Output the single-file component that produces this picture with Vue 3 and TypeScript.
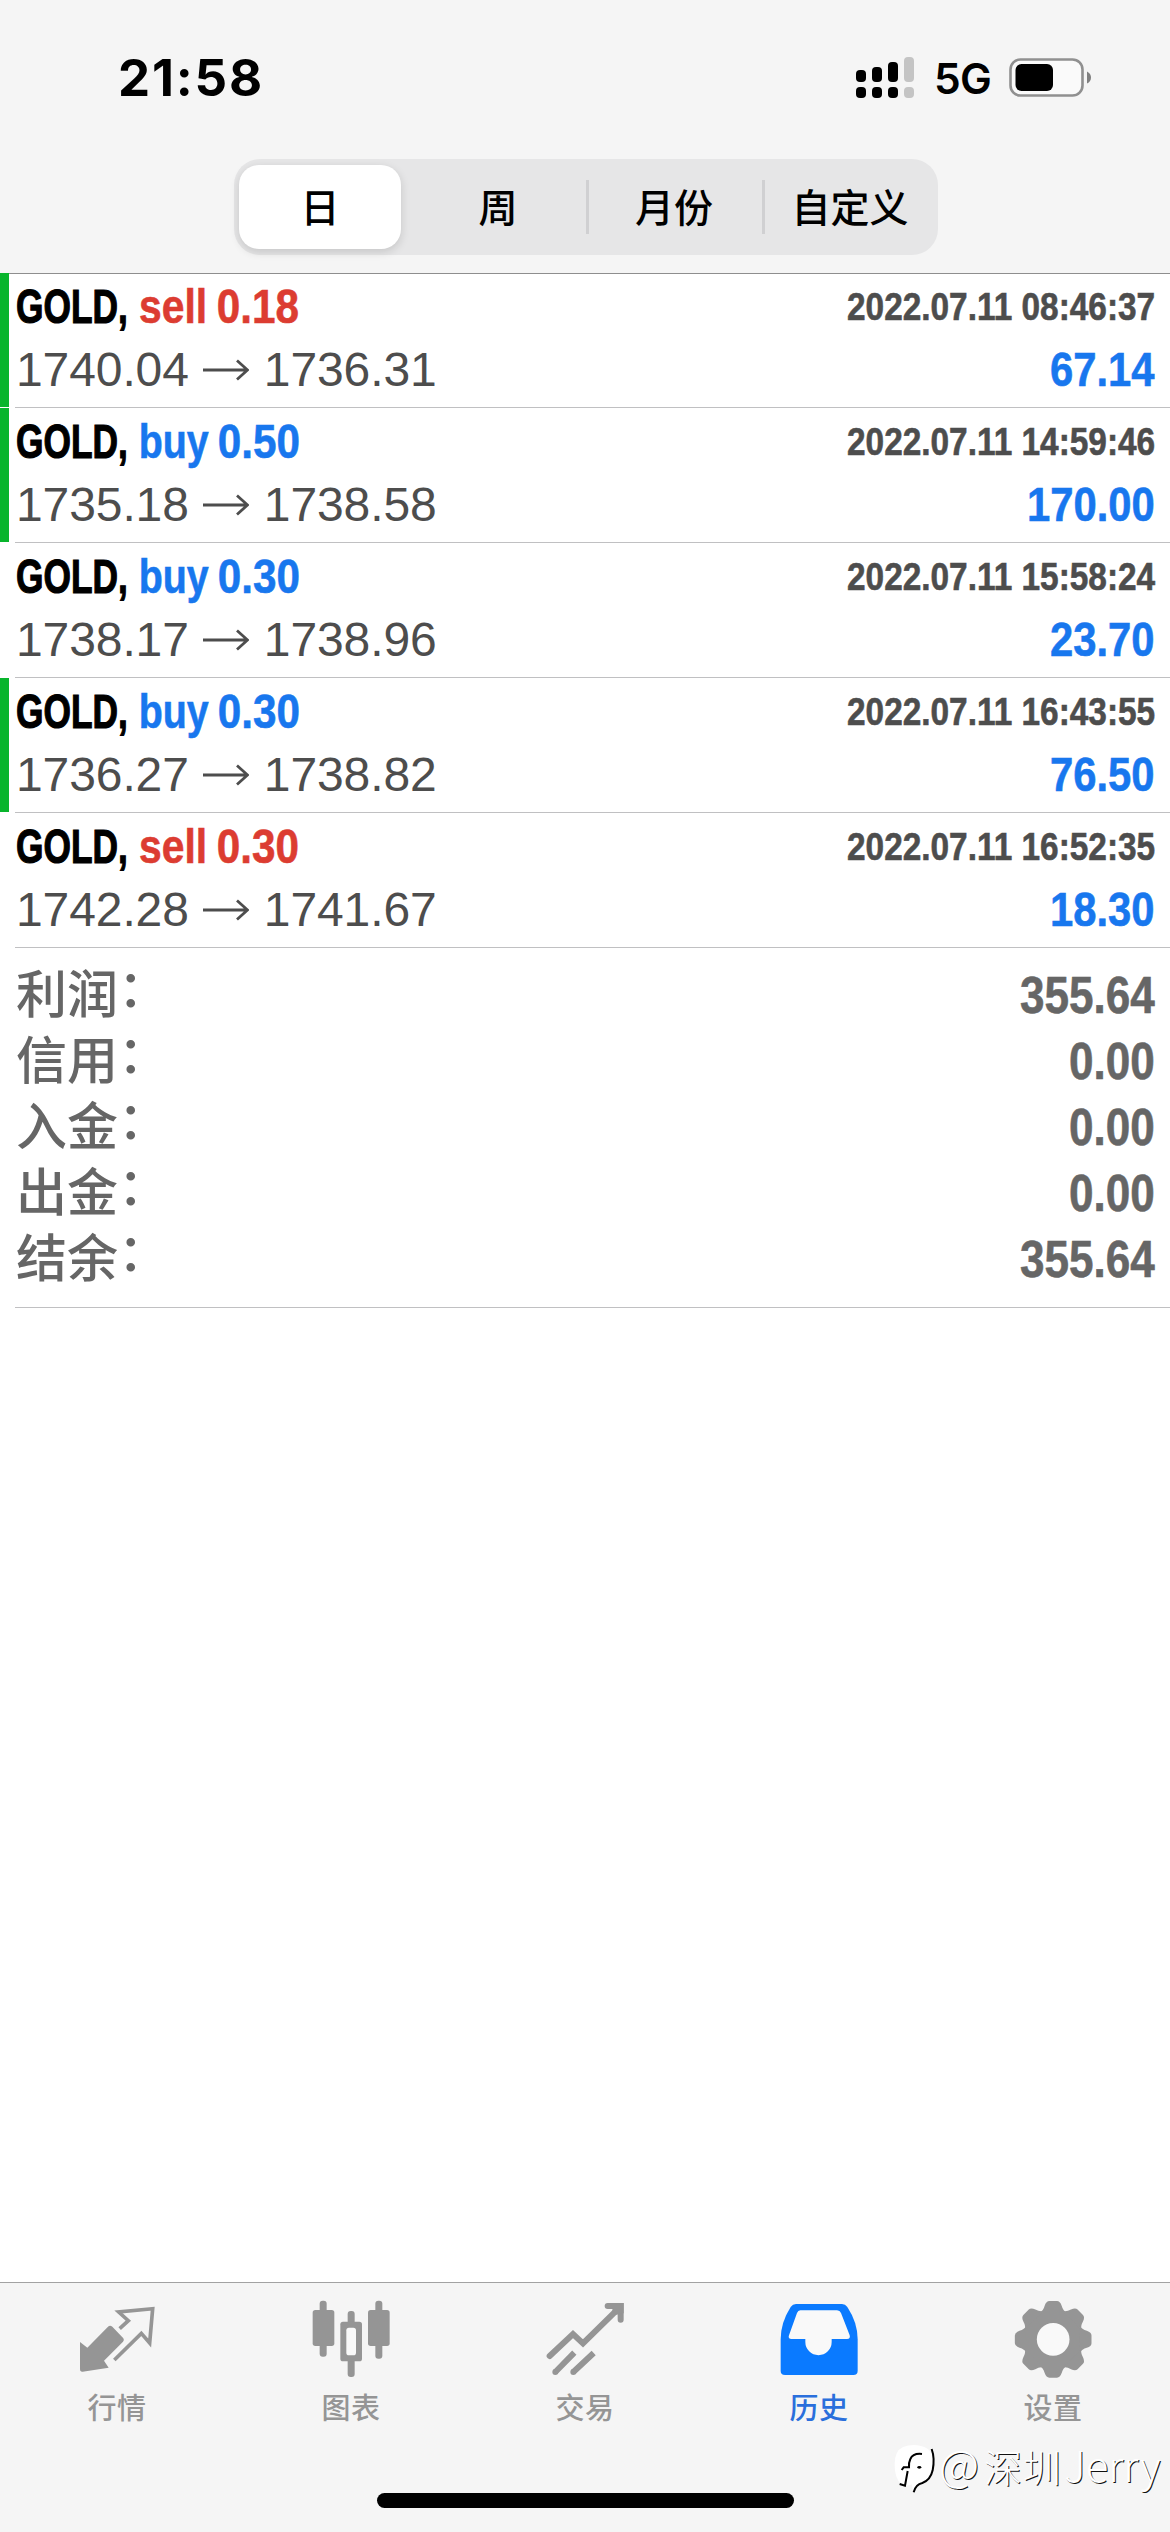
<script setup lang="ts">
interface Deal {
  symbol: string
  side: 'buy' | 'sell'
  volume: string
  open: string
  close: string
  time: string
  profit: string
  marked: boolean
}

const periods: string[] = ['日', '周', '月份', '自定义']
const activePeriod = 0

const deals: Deal[] = [
  { symbol: 'GOLD', side: 'sell', volume: '0.18', open: '1740.04', close: '1736.31', time: '2022.07.11 08:46:37', profit: '67.14', marked: true },
  { symbol: 'GOLD', side: 'buy', volume: '0.50', open: '1735.18', close: '1738.58', time: '2022.07.11 14:59:46', profit: '170.00', marked: true },
  { symbol: 'GOLD', side: 'buy', volume: '0.30', open: '1738.17', close: '1738.96', time: '2022.07.11 15:58:24', profit: '23.70', marked: false },
  { symbol: 'GOLD', side: 'buy', volume: '0.30', open: '1736.27', close: '1738.82', time: '2022.07.11 16:43:55', profit: '76.50', marked: true },
  { symbol: 'GOLD', side: 'sell', volume: '0.30', open: '1742.28', close: '1741.67', time: '2022.07.11 16:52:35', profit: '18.30', marked: false },
]

const summary: { label: string; value: string }[] = [
  { label: '利润', value: '355.64' },
  { label: '信用', value: '0.00' },
  { label: '入金', value: '0.00' },
  { label: '出金', value: '0.00' },
  { label: '结余', value: '355.64' },
]

const tabs: { id: string; label: string; box: string }[] = [
  { id: 'quotes', label: '行情', box: '234 90 234 234' },
  { id: 'charts', label: '图表', box: '937 90 234 234' },
  { id: 'trade', label: '交易', box: '139 90 234 234' },
  { id: 'history', label: '历史', box: '841 90 234 234' },
  { id: 'settings', label: '设置', box: '493 90 234 234' },
]
const activeTab = 'history'

// Condenses a text run horizontally and gives the saved width back to the flow.
const vCondense = {
  mounted(el: HTMLElement, binding: { value: number }) {
    const natural = el.getBoundingClientRect().width
    el.style.transform = `scaleX(${binding.value})`
    el.style.marginRight = `${natural * (binding.value - 1)}px`
  },
}
</script>

<template>
  <div class="screen">
    <header class="top">
      <div class="status">
        <span class="clock">21:58</span>
        <div class="status-right">
          <svg class="signal" width="58" height="42" viewBox="0 0 58 42">
            <g fill="#000">
              <rect x="0" y="13" width="10" height="12" rx="4" />
              <rect x="16" y="10" width="10" height="15" rx="4" />
              <rect x="32" y="5" width="10" height="20" rx="4" />
              <rect x="0" y="30" width="10" height="11" rx="4" />
              <rect x="16" y="30" width="10" height="11" rx="4" />
              <rect x="32" y="30" width="10" height="11" rx="4" />
            </g>
            <g fill="#c4c4c4">
              <rect x="48" y="0" width="10" height="25" rx="4" />
              <rect x="48" y="30" width="10" height="11" rx="4" />
            </g>
          </svg>
          <span class="network">5G</span>
          <svg class="battery" width="83" height="40" viewBox="0 0 83 40">
            <rect x="1.5" y="1.5" width="72" height="36" rx="10" fill="#fafafa" stroke="#909090" stroke-width="2.6" />
            <rect x="6.5" y="6" width="37.5" height="27" rx="6" fill="#000" />
            <path d="M78 13.5q4 2 4 6t-4 6z" fill="#808080" />
          </svg>
        </div>
      </div>
      <div class="segments">
        <div
          v-for="(p, i) in periods"
          :key="p"
          class="segment"
          :class="{ active: i === activePeriod, divided: i > 1 }"
        >{{ p }}</div>
      </div>
    </header>

    <main>
      <section class="deals">
        <article v-for="d in deals" :key="d.time" class="deal">
          <i class="mark" :class="{ on: d.marked }"></i>
          <div class="deal-body">
            <div class="line first">
              <div class="title">
                <span v-condense="0.735" class="run symbol">{{ d.symbol }},</span>
                <span v-condense="d.side === 'sell' ? 0.85 : 0.82" class="run side" :class="d.side">{{ d.side }}</span>
                <span v-condense="0.88" class="run volume" :class="d.side">{{ d.volume }}</span>
              </div>
              <span v-condense="0.856" class="run time">{{ d.time }}</span>
            </div>
            <div class="line second">
              <div class="prices">
                <span>{{ d.open }}</span>
                <svg width="46" height="22" viewBox="0 0 46 22" fill="none" stroke="#4d4d4d" stroke-width="2.8">
                  <path d="M0 11H44M34 1.5L44.5 11L34 20.5" />
                </svg>
                <span>{{ d.close }}</span>
              </div>
              <span v-condense="0.87" class="run profit">{{ d.profit }}</span>
            </div>
          </div>
        </article>
      </section>

      <section class="summary">
        <div v-for="s in summary" :key="s.label" class="total">
          <span class="label">{{ s.label }}<span class="colon">：</span></span>
          <span v-condense="0.864" class="run value">{{ s.value }}</span>
        </div>
      </section>
    </main>

    <nav class="tabbar">
      <div class="tabs">
        <div v-for="t in tabs" :key="t.id" class="tab" :class="{ active: t.id === activeTab }">
          <svg class="tab-icon" width="78" height="78" :viewBox="t.box">
            <g v-if="t.id === 'quotes'">
              <path d="M240 216L262 233L324 170Q330 164 337 170L370 205Q374 210 369 215L312 272L326 293L248 305Q240 306 240 297Z" fill="currentColor" />
              <path d="M359 176L385 152L356 126L458 116L449 219L424 190L343 270" fill="none" stroke="currentColor" stroke-width="11" />
            </g>
            <g v-else-if="t.id === 'charts'" fill="currentColor">
              <rect x="960" y="92" width="21" height="168" rx="9" />
              <rect x="939" y="120" width="65" height="108" rx="8" />
              <rect x="1127" y="92" width="21" height="174" rx="9" />
              <rect x="1105" y="120" width="65" height="108" rx="8" />
              <rect x="1044" y="123" width="21" height="198" rx="9" />
              <rect x="1022" y="155" width="65" height="119" rx="8" />
              <rect x="1040" y="173" width="29" height="83" rx="8" fill="#f9f9f9" />
            </g>
            <g v-else-if="t.id === 'trade'" fill="none" stroke="currentColor" stroke-width="18">
              <path d="M150 258L220 192L250 220L350 122" stroke-linecap="round" stroke-linejoin="miter" />
              <path d="M324 108H363V149" stroke-linecap="round" />
              <path d="M340 99H372V130L350 134L338 122Z" fill="currentColor" stroke="none" />
              <path d="M167 306L224 248M221 306L282 249" />
              <circle cx="167" cy="306" r="9" fill="currentColor" stroke="none" />
              <circle cx="221" cy="306" r="9" fill="currentColor" stroke="none" />
            </g>
            <g v-else-if="t.id === 'history'">
              <path d="M889 102H1027Q1037 102 1043 111Q1074 158 1074 208V302Q1074 315 1061 315H856Q843 315 843 302V208Q843 158 873 111Q879 102 889 102Z" fill="currentColor" />
              <path d="M902 121H1012Q1021 121 1024 129L1050 196Q1053 207 1042 207H996V216A39.500 39.500 0 0 1 917 216V207H876Q864 207 868 196L892 129Q895 121 902 121Z" fill="#f9f9f9" />
            </g>
            <g v-else>
              <g fill="currentColor">
                <circle cx="610.500" cy="208" r="88" />
                <path
                  v-for="n in 8"
                  :key="n"
                  :transform="`rotate(${n * 45} 610.5 208)`"
                  d="M570 128Q581 122 585 107Q590 93 599 93H622Q631 93 636 107Q640 122 651 128Z"
                />
              </g>
              <circle cx="610.500" cy="208" r="49" fill="#f9f9f9" />
            </g>
          </svg>
          <span class="tab-label">{{ t.label }}</span>
        </div>
      </div>
      <div class="home-bar"></div>
      <div class="watermark">
        <svg width="44" height="50" viewBox="24 30 132 150">
          <path d="M54 36Q86 24 118 36Q146 46 146 84Q146 128 116 142Q96 148 84 168L80 148Q70 154 56 150Q30 140 29 90Q28 48 54 36Z" fill="#fff" />
          <g fill="none" stroke="#000" stroke-width="6">
            <path d="M111 57Q84 54 76 72Q71 82 72 97H56L50 105" />
            <path d="M68 108L60 152L44 147" />
            <path d="M140 42Q150 70 143 106Q136 136 112 144Q92 148 86 172" />
          </g>
          <ellipse cx="103" cy="97" rx="6" ry="4" />
        </svg>
        <div class="handle">
          <span class="at">@</span>
          <span class="city">深圳</span>
          <span class="name">Jerry</span>
        </div>
      </div>
    </nav>
  </div>
</template>

<style>
body {
  margin: 0;
  background: #fff;
}
</style>

<style scoped>
.screen {
  width: 1170px;
  height: 2532px;
  display: flex;
  flex-direction: column;
  background: #fff;
  overflow: hidden;
  font-family: "Liberation Sans", "Noto Sans CJK SC", sans-serif;
}
.top {
  box-sizing: border-box;
  height: 273px;
  background: #f5f5f5;
  flex: none;
}
.status {
  height: 159px;
  box-sizing: border-box;
  padding: 48px 78px 0 118px;
  display: flex;
  justify-content: space-between;
  align-items: flex-start;
}
.clock {
  font: 700 51px/60px Inter, sans-serif;
  letter-spacing: 1.8px;
}
.status-right {
  display: flex;
  align-items: flex-start;
}
.signal {
  margin-top: 9px;
}
.network {
  font: 600 42.5px/50px Inter, sans-serif;
  width: 57px;
  margin: 6px 0 0 20px;
  letter-spacing: -0.8px;
  white-space: nowrap;
}
.battery {
  margin: 10px 0 0 18px;
}
.segments {
  width: 704px;
  height: 96px;
  margin-left: 234px;
  border-radius: 26px;
  background: #e6e6e7;
  display: flex;
}
.segment {
  flex: 1;
  box-sizing: border-box;
  padding-bottom: 5px;
  display: flex;
  align-items: center;
  justify-content: center;
  font: 500 39px/56px "Noto Sans CJK SC", sans-serif;
  color: #000;
}
.segment.active {
  flex: none;
  width: 162px;
  height: 84px;
  margin: 6px 9px 0 5px;
  border-radius: 20px;
  background: #fff;
  box-shadow: 0 3px 10px rgba(0, 0, 0, 0.14);
}
.segment.divided {
  background: linear-gradient(#d0d0d2, #d0d0d2) 0 50% / 3px 54px no-repeat;
}
.deals {
  display: flex;
  flex-direction: column;
}
.deal {
  display: flex;
  height: 135px;
}
.deal:first-child {
  box-shadow: inset 0 1px 0 #8e8e8e;
}
.mark {
  width: 9px;
  height: 134px;
  margin-right: 6px;
}
.mark.on {
  background: #08b52c;
}
.deal-body {
  flex: 1;
  box-sizing: border-box;
  padding: 4px 15px 0 0;
  border-bottom: 1px solid #c0c0c2;
}
.line {
  display: flex;
  justify-content: space-between;
}
.first {
  height: 60px;
  line-height: 60px;
}
.second {
  height: 66px;
  line-height: 66px;
}
.run {
  display: inline-block;
  white-space: nowrap;
  transform-origin: 0 50%;
  font-weight: 700;
  -webkit-text-stroke: 0.6px currentColor;
}
.title {
  display: flex;
  padding-left: 1px;
  font-size: 48px;
}
.symbol {
  color: #000;
  -webkit-text-stroke-width: 1.2px;
}
.side {
  padding-left: 13px;
}
.volume {
  padding-left: 11px;
}
.sell {
  color: #dc3c31;
}
.buy {
  color: #1877ee;
}
.time {
  font-size: 39px;
  color: #4d4d4d;
}
.prices {
  display: flex;
  padding-left: 1px;
  font-size: 48px;
  letter-spacing: -0.1px;
  color: #4d4d4d;
}
.prices svg {
  margin: 22px 15px 0 14px;
}
.profit {
  font-size: 48px;
  color: #1877ee;
}
.summary {
  margin-left: 15px;
  padding: 15px 15px 14px 0;
  border-bottom: 1px solid #c0c0c2;
}
.total {
  height: 66px;
  display: flex;
  justify-content: space-between;
  line-height: 66px;
  color: #666;
}
.label {
  padding-left: 1px;
  font-weight: 500;
  font-size: 51px;
}
.colon {
  position: relative;
  top: -6px;
}
.value {
  font-size: 51px;
}
.tabbar {
  position: relative;
  margin-top: auto;
  height: 250px;
  box-sizing: border-box;
  border-top: 1px solid #a2a2a2;
  background: #f5f5f5;
}
.tabs {
  display: flex;
  padding-top: 17px;
}
.tab {
  flex: 1;
  display: flex;
  flex-direction: column;
  align-items: center;
  color: #959595;
}
.tab.active {
  color: #0a7aff;
}
.tab-label {
  margin: 8px 0 1px;
  font: 500 29px/40px "Noto Sans CJK SC", sans-serif;
  letter-spacing: 0.6px;
}
.tab.active .tab-label {
  color: #2a6fdc;
}
.home-bar {
  width: 417px;
  height: 15px;
  margin: 66px auto 0;
  border-radius: 8px;
  background: #000;
}
.watermark {
  position: absolute;
  left: 893px;
  top: 155px;
  display: flex;
  align-items: flex-start;
}
.watermark svg {
  margin: 7px 2px 0 0;
}
.handle {
  display: flex;
  align-items: baseline;
  font: 300 38px/50px "Noto Sans CJK SC", sans-serif;
  color: #fff;
  text-shadow: 1px 1px 0 #111;
  white-space: nowrap;
}
.at {
  width: 45px;
  font-size: 44px;
}
.city {
  width: 80px;
  letter-spacing: 1px;
}
.name {
  font-size: 42px;
}
</style>
